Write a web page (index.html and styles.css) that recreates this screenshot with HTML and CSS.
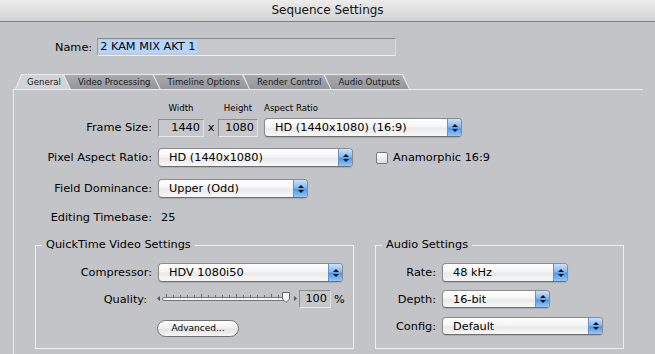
FILE: index.html
```html
<!DOCTYPE html>
<html lang="en">
<head>
  <meta charset="UTF-8" />
  <title>Sequence Settings</title>
  <link rel="stylesheet" href="styles.css">
</head>
<body>
  <div class="titlebar">Sequence Settings</div>

  <div class="name-row">
    <label>Name:</label>
    <div class="name-field"><span class="selected">2 KAM MIX AKT 1</span></div>
  </div>

  <div class="tabs">
    <div class="tab active"><span>General</span></div>
    <div class="tab"><span>Video Processing</span></div>
    <div class="tab"><span>Timeline Options</span></div>
    <div class="tab"><span>Render Control</span></div>
    <div class="tab"><span>Audio Outputs</span></div>
  </div>

  <div class="panel">
    <div class="col-heads">
      <span class="head-w">Width</span>
      <span class="head-x"></span>
      <span class="head-h">Height</span>
      <span class="head-ar">Aspect Ratio</span>
    </div>

    <div class="row frame-row">
      <label class="label">Frame Size:</label>
      <div class="field fw">1440</div>
      <span class="times">x</span>
      <div class="field fh">1080</div>
      <div class="popup ar"><span>HD (1440x1080) (16:9)</span><i class="arrows"></i></div>
    </div>

    <div class="row par-row">
      <label class="label">Pixel Aspect Ratio:</label>
      <div class="popup par"><span>HD (1440x1080)</span><i class="arrows"></i></div>
      <div class="check"></div>
      <span>Anamorphic 16:9</span>
    </div>

    <div class="row fd-row">
      <label class="label">Field Dominance:</label>
      <div class="popup fd"><span>Upper (Odd)</span><i class="arrows"></i></div>
    </div>

    <div class="row et-row">
      <label class="label">Editing Timebase:</label>
      <span class="timebase">25</span>
    </div>

    <div class="groups">
      <fieldset class="qt">
        <legend>QuickTime Video Settings</legend>
        <div class="row">
          <label class="label">Compressor:</label>
          <div class="popup comp"><span>HDV 1080i50</span><i class="arrows"></i></div>
        </div>
        <div class="row quality-row">
          <label class="label">Quality:</label>
          <svg class="slider" width="140" height="16" viewBox="0 0 140 16">
            <path d="M0 7.5 L3 5 L3 10 Z" fill="#555"/>
            <g stroke="#6a6a6a" stroke-width="1">
              <line x1="9.5" y1="3" x2="9.5" y2="6"/>
              <line x1="16.5" y1="4" x2="16.5" y2="6"/>
              <line x1="23.5" y1="4" x2="23.5" y2="6"/>
              <line x1="30.5" y1="4" x2="30.5" y2="6"/>
              <line x1="37.5" y1="4" x2="37.5" y2="6"/>
              <line x1="44.5" y1="3" x2="44.5" y2="6"/>
              <line x1="51.5" y1="4" x2="51.5" y2="6"/>
              <line x1="58.5" y1="4" x2="58.5" y2="6"/>
              <line x1="65.5" y1="4" x2="65.5" y2="6"/>
              <line x1="72.5" y1="4" x2="72.5" y2="6"/>
              <line x1="79.5" y1="3" x2="79.5" y2="6"/>
              <line x1="86.5" y1="4" x2="86.5" y2="6"/>
              <line x1="93.5" y1="4" x2="93.5" y2="6"/>
              <line x1="100.5" y1="4" x2="100.5" y2="6"/>
              <line x1="107.5" y1="4" x2="107.5" y2="6"/>
              <line x1="114.5" y1="3" x2="114.5" y2="6"/>
              <line x1="121.5" y1="4" x2="121.5" y2="6"/>
            </g>
            <rect x="5.5" y="6.5" width="123" height="3" rx="1.5" fill="#fafafa" stroke="#777"/>
            <path d="M125.5 1.5 H132.5 V8 L129 11.5 L125.5 8 Z" fill="#f2f2f2" stroke="#666"/>
            <path d="M140 7.5 L137 5 L137 10 Z" fill="#555"/>
          </svg>
          <div class="field quality">100</div>
          <span class="pct">%</span>
        </div>
        <button class="adv">Advanced...</button>
      </fieldset>

      <fieldset class="audio">
        <legend>Audio Settings</legend>
        <div class="row">
          <label class="label">Rate:</label>
          <div class="popup rate"><span>48 kHz</span><i class="arrows"></i></div>
        </div>
        <div class="row depth-row">
          <label class="label">Depth:</label>
          <div class="popup depth"><span>16-bit</span><i class="arrows"></i></div>
        </div>
        <div class="row config-row">
          <label class="label">Config:</label>
          <div class="popup config"><span>Default</span><i class="arrows"></i></div>
        </div>
      </fieldset>
    </div>
  </div>
</body>
</html>
```

FILE: styles.css
```css
* {
  box-sizing: border-box;
}

body {
  margin: 0;
  background-color: #c3c4c8;
  font-family: "DejaVu Sans", "Liberation Sans", sans-serif;
  font-size: 11.3px;
  color: #000;
  overflow: hidden;
}

.titlebar {
  height: 22px;
  border-bottom: 1px solid #7e7e7e;
  background: linear-gradient(#ececec, #d2d2d2);
  text-align: center;
  font-size: 12px;
  line-height: 21px;
  color: #111;
}

.name-row {
  display: flex;
  align-items: center;
  height: 18px;
  margin: 16px 0 0 55px;
}

.name-row label {
  margin-right: 5px;
}

.name-field {
  width: 299px;
  height: 18px;
  border: 1px solid;
  border-color: #8a8a8a #dadada #f0f0f0 #9a9a9a;
  background-color: #c7c8cc;
  padding: 0 1px;
  line-height: 16px;
}

.selected {
  background-color: #b5d5ff;
  padding: 0 1px;
}

/* tabs */
.tabs {
  display: flex;
  height: 15px;
  margin: 18px 0 0 15px;
  font-size: 8.6px;
}

.tab {
  background-color: #e9e9eb;
  padding-top: 1px;
  margin-left: -7px;
  clip-path: polygon(0 0, calc(100% - 7px) 0, 100% 100%, 0 100%);
}

.tab span {
  display: block;
  height: 14px;
  line-height: 14px;
  padding: 0 10px 0 14px;
  color: #1a1a1a;
  background: linear-gradient(#a9aaaf, #95969b);
  clip-path: polygon(0 0, calc(100% - 8px) 0, calc(100% - 1px) 100%, 0 100%);
}

.tab.active {
  margin-left: 0;
  clip-path: polygon(6px 0, calc(100% - 7px) 0, 100% 100%, 0 100%);
}

.tab.active span {
  padding-left: 12px;
  background: #d2d3d6;
  clip-path: polygon(7px 0, calc(100% - 8px) 0, calc(100% - 1px) 100%, 1px 100%);
}

.tab:nth-child(1) { z-index: 5; }
.tab:nth-child(2) { z-index: 4; }
.tab:nth-child(3) { z-index: 3; }
.tab:nth-child(4) { z-index: 2; }
.tab:nth-child(5) { z-index: 1; }

.panel {
  width: 630px;
  height: 265px;
  margin-left: 13px;
  padding-top: 13px;
  border-top: 1px solid #ececee;
  border-left: 1px solid #ececee;
}

.col-heads {
  display: flex;
  height: 10px;
  line-height: 10px;
  font-size: 8.6px;
  padding-left: 144px;
}

.head-w { width: 46px; text-align: center; }
.head-x { width: 14px; }
.head-h { width: 40px; text-align: center; margin-right: 6px; }

/* rows */
.row {
  display: flex;
  align-items: center;
  height: 19px;
}

.label {
  width: 138px;
  margin-right: 6px;
  text-align: right;
  white-space: nowrap;
}

.frame-row { margin-top: 5px; }
.par-row { margin-top: 11px; }
.fd-row { margin-top: 12px; }
.et-row { margin-top: 12px; height: 14px; }

.timebase {
  padding-left: 3px;
}

.field {
  height: 18px;
  border: 1px solid;
  border-color: #8c8c8c #e2e2e2 #e8e8e8 #8c8c8c;
  background-color: #c6c7cb;
  text-align: right;
  padding-right: 3px;
  line-height: 16px;
}

.fw { width: 46px; }
.fh { width: 40px; }

.times {
  width: 14px;
  text-align: center;
}

/* aqua popup */
.popup {
  display: flex;
  height: 19px;
  border: 1px solid #8b8b8b;
  border-bottom-color: #6e6e6e;
  border-radius: 4px;
  overflow: hidden;
  background: linear-gradient(#ffffff, #f5f5f5 45%, #e9e9e9 55%, #f8f8f8);
  box-shadow: 0 1px 1px rgba(0, 0, 0, 0.12);
}

.popup span {
  flex: 1;
  padding-left: 10px;
  line-height: 17px;
  white-space: nowrap;
}

.arrows {
  width: 14px;
  display: flex;
  flex-direction: column;
  align-items: center;
  justify-content: center;
  gap: 2px;
  border-left: 1px solid #6d8fc0;
  background: linear-gradient(#c8e2fd, #83b9f3 45%, #4f98ec 55%, #90c9fb);
}

.arrows::before {
  content: "";
  border-left: 3px solid transparent;
  border-right: 3px solid transparent;
  border-bottom: 3px solid #111;
}

.arrows::after {
  content: "";
  border-left: 3px solid transparent;
  border-right: 3px solid transparent;
  border-top: 3px solid #111;
}

.ar { width: 198px; margin-left: 6px; }
.par { width: 195px; }
.fd { width: 150px; }
.comp { width: 185px; }
.rate { width: 126px; }
.depth { width: 108px; height: 18px; }
.config { width: 161px; height: 18px; }

.check {
  width: 12px;
  height: 12px;
  margin: 0 5px 0 23px;
  border: 1px solid #7a7a7a;
  border-radius: 2px;
  background: linear-gradient(#ffffff, #dcdcdc);
}

/* group boxes */
.groups {
  display: flex;
  gap: 21px;
  margin: 14px 0 0 21px;
}

fieldset {
  margin: 0;
  padding: 11px 0 11px 0;
  border: 1px solid #efeff1;
  min-width: 0;
}

legend {
  margin-left: 6px;
  padding: 0 4px;
  line-height: 14px;
}

.qt { width: 319px; }
.audio { width: 249px; }

.qt .label { width: 116px; }
.audio .label { width: 60px; }

.quality-row {
  margin-top: 8px;
  height: 18px;
}

.qt .quality-row .label {
  width: 111px;
  margin-right: 10px;
}

.slider {
  display: block;
}

.quality {
  width: 32px;
  margin-left: 2px;
}

.pct {
  margin-left: 3px;
}

.adv {
  display: block;
  width: 82px;
  height: 17px;
  margin: 12px 0 0 121px;
  padding: 0;
  border: 1px solid #737373;
  border-radius: 9px;
  background: linear-gradient(#ffffff, #f1f1f1 45%, #e2e2e2 55%, #f6f6f6);
  font-family: inherit;
  font-size: 9px;
  line-height: 15px;
  color: #000;
}

.depth-row { margin-top: 8px; height: 18px; }
.config-row { margin-top: 9px; height: 18px; }
```
